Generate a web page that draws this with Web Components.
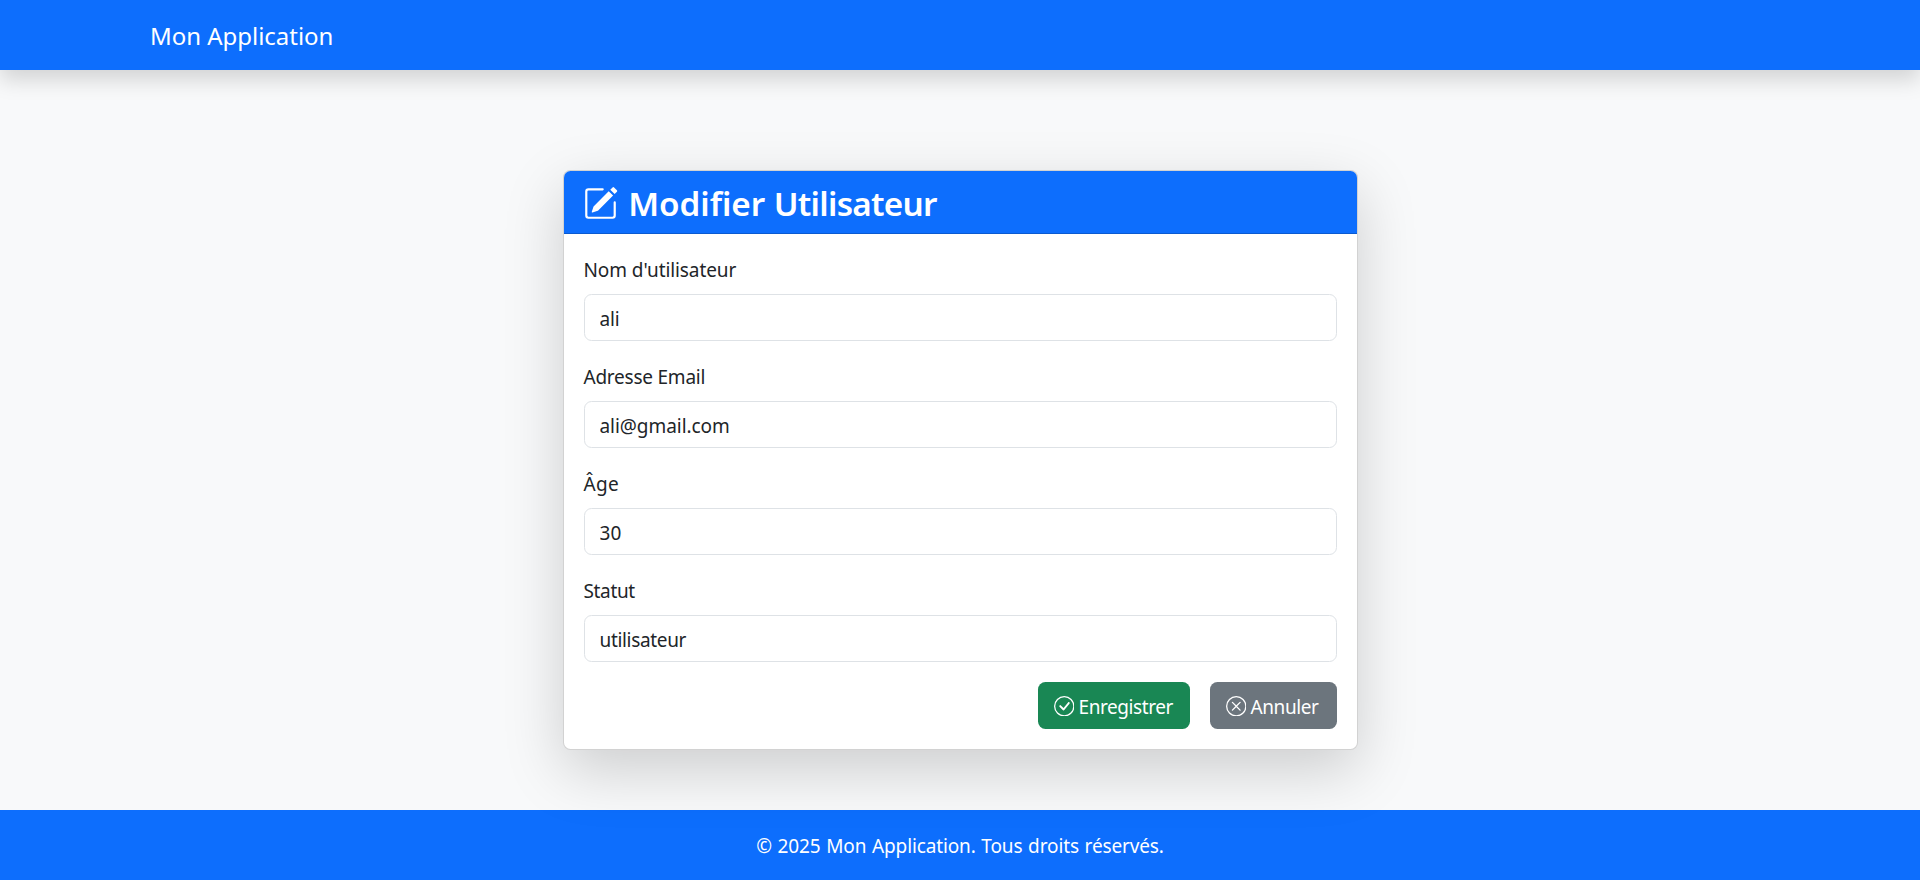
<!DOCTYPE html>
<html lang="fr">
<head>
<meta charset="utf-8">
<title>Modifier Utilisateur</title>
<style>
  html, body { height: 100%; }
  body {
    margin: 0;
    background: #f8f9fa;
    color: #212529;
    font: 400 19px/30px "Noto Sans", "Open Sans", sans-serif;
  }
</style>
</head>
<body>
<app-page>
  <app-navbar slot="top">Mon Application</app-navbar>
  <app-card>
    <app-icon slot="header" name="pencil-square" style="margin:0 1px 0 -.75px"></app-icon>
    <span slot="header"><span style="letter-spacing:-.05px">Modifier </span><span style="letter-spacing:-.72px">Utilisateur</span></span>
    <form-field label="Nom d'utilisateur" value="ali" style="--label-ls:-.09px;--value-ls:-.2px"></form-field>
    <form-field label="Adresse Email" value="ali@gmail.com" style="--label-ls:-.23px;--value-ls:-.05px"></form-field>
    <form-field label="Âge" value="30" style="--label-ls:.3px;--value-ls:.13px"></form-field>
    <form-field label="Statut" value="utilisateur" style="--label-ls:-.35px;--value-ls:-.33px"></form-field>
    <app-button slot="actions" variant="success" style="width:152px;letter-spacing:-.42px"><app-icon slot="icon" name="check-circle"></app-icon>Enregistrer</app-button>
    <app-button slot="actions" variant="secondary" style="width:127px;letter-spacing:-.41px"><app-icon slot="icon" name="x-circle"></app-icon>Annuler</app-button>
  </app-card>
  <app-footer slot="bottom">© 2025 Mon Application. Tous droits réservés.</app-footer>
</app-page>

<script>
const define = (name, html) => customElements.define(name, class extends HTMLElement {
  constructor() {
    super();
    this.attachShadow({ mode: 'open' }).innerHTML = html;
  }
});

define('app-page', `
  <style>
    :host { display: flex; flex-direction: column; height: 100vh; overflow: hidden; }
    main { flex: 1; display: flex; justify-content: center; align-items: flex-start; padding-top: 100px; }
  </style>
  <slot name="top"></slot><main><slot></slot></main><slot name="bottom"></slot>`);

define('app-navbar', `
  <style>
    :host { display: flex; align-items: center; box-sizing: border-box; height: 70px; padding: 1px 150px 0;
      background: #0d6efd; color: #fff; font-size: 24px; letter-spacing: -.03px;
      box-shadow: 0 10px 20px rgba(0,0,0,.15); }
  </style>
  <slot></slot>`);

define('app-footer', `
  <style>
    :host { display: flex; align-items: center; justify-content: center; box-sizing: border-box; height: 70px;
      padding-top: 2px; background: #0d6efd; color: #fff; letter-spacing: -.13px; word-spacing: .9px; }
  </style>
  <slot></slot>`);

define('app-card', `
  <style>
    :host { display: block; position: relative; box-sizing: border-box; width: 795px; background: #fff;
      border: 1px solid rgba(0,0,0,.175); border-radius: 7.5px;
      box-shadow: 0 20px 60px rgba(0,0,0,.175); }
    header { display: flex; align-items: center; gap: 9.5px; box-sizing: border-box; height: 63px;
      padding: 2px 20px 0; background: #0d6efd; color: #fff; border-bottom: 1px solid rgba(0,0,0,.175);
      border-radius: 6.5px 6.5px 0 0; font-size: 33.25px; font-weight: 600; line-height: 42px;
      --icon-size: 35px; }
    .body { display: flex; flex-direction: column; gap: 20px; padding: 20px; }
    .actions { display: flex; justify-content: flex-end; gap: 20px; }
  </style>
  <header><slot name="header"></slot></header>
  <div class="body"><slot></slot><div class="actions"><slot name="actions"></slot></div></div>`);

define('app-button', `
  <style>
    :host { display: flex; align-items: center; gap: 4.5px; box-sizing: border-box; padding-left: 16px;
      height: 47px; border-radius: 7.5px; color: #fff; background: #6c757d; --icon-size: 20.5px; }
    :host([variant="success"]) { background: #198754; }
    .text { padding-top: 2px; }
    .icon { display: flex; padding-top: 1px; }
  </style>
  <span class="icon"><slot name="icon"></slot></span><span class="text"><slot></slot></span>`);

customElements.define('form-field', class extends HTMLElement {
  constructor() {
    super();
    this.attachShadow({ mode: 'open' }).innerHTML = `
      <style>
        :host { display: flex; flex-direction: column; gap: 10px; }
        label { height: 29px; padding-top: 1px; letter-spacing: var(--label-ls, 0); }
        input { box-sizing: border-box; width: 100%; height: 47px; margin: 0; padding: 2px 15px 0; outline: 0;
          border: 1px solid #dee2e6; border-radius: 7.5px; background: #fff; color: #212529;
          font: inherit; letter-spacing: var(--value-ls, 0); }
      </style>
      <label for="control"></label><input id="control" type="text">`;
  }
  connectedCallback() {
    this.shadowRoot.querySelector('label').textContent = this.getAttribute('label');
    this.shadowRoot.querySelector('input').setAttribute('value', this.getAttribute('value'));
  }
});

const ICONS = {
  'pencil-square': '<path d="M15.502 1.94a.5.5 0 0 1 0 .706L14.459 3.69l-2-2L13.502.646a.5.5 0 0 1 .707 0l1.293 1.293zm-1.75 2.456-2-2L4.939 9.21a.5.5 0 0 0-.121.196l-.805 2.414a.25.25 0 0 0 .316.316l2.414-.805a.5.5 0 0 0 .196-.12l6.813-6.814z"/><path fill-rule="evenodd" d="M1 13.5A1.5 1.5 0 0 0 2.5 15h11a1.5 1.5 0 0 0 1.5-1.5v-6a.5.5 0 0 0-1 0v6a.5.5 0 0 1-.5.5h-11a.5.5 0 0 1-.5-.5v-11a.5.5 0 0 1 .5-.5H9a.5.5 0 0 0 0-1H2.5A1.5 1.5 0 0 0 1 2.5z"/>',
  'check-circle': '<path d="M8 15A7 7 0 1 1 8 1a7 7 0 0 1 0 14m0 1A8 8 0 1 0 8 0a8 8 0 0 0 0 16"/><path d="M10.97 4.97a.235.235 0 0 0-.02.022L7.477 9.417 5.384 7.323a.75.75 0 0 0-1.06 1.06L6.97 11.03a.75.75 0 0 0 1.079-.02l3.992-4.99a.75.75 0 0 0-1.071-1.05"/>',
  'x-circle': '<path d="M8 15A7 7 0 1 1 8 1a7 7 0 0 1 0 14m0 1A8 8 0 1 0 8 0a8 8 0 0 0 0 16"/><path d="M4.646 4.646a.5.5 0 0 1 .708 0L8 7.293l2.646-2.647a.5.5 0 0 1 .708.708L8.707 8l2.647 2.646a.5.5 0 0 1-.708.708L8 8.707l-2.646 2.647a.5.5 0 0 1-.708-.708L7.293 8 4.646 5.354a.5.5 0 0 1 0-.708"/>'
};
customElements.define('app-icon', class extends HTMLElement {
  connectedCallback() {
    if (this.shadowRoot) return;
    this.attachShadow({ mode: 'open' }).innerHTML = `
      <style>
        :host { display: block; flex: none; width: var(--icon-size); height: var(--icon-size); }
        svg { display: block; width: 100%; height: 100%; }
      </style>
      <svg viewBox="0 0 16 16" fill="currentColor" aria-hidden="true">${ICONS[this.getAttribute('name')]}</svg>`;
  }
});
</script>
</body>
</html>
